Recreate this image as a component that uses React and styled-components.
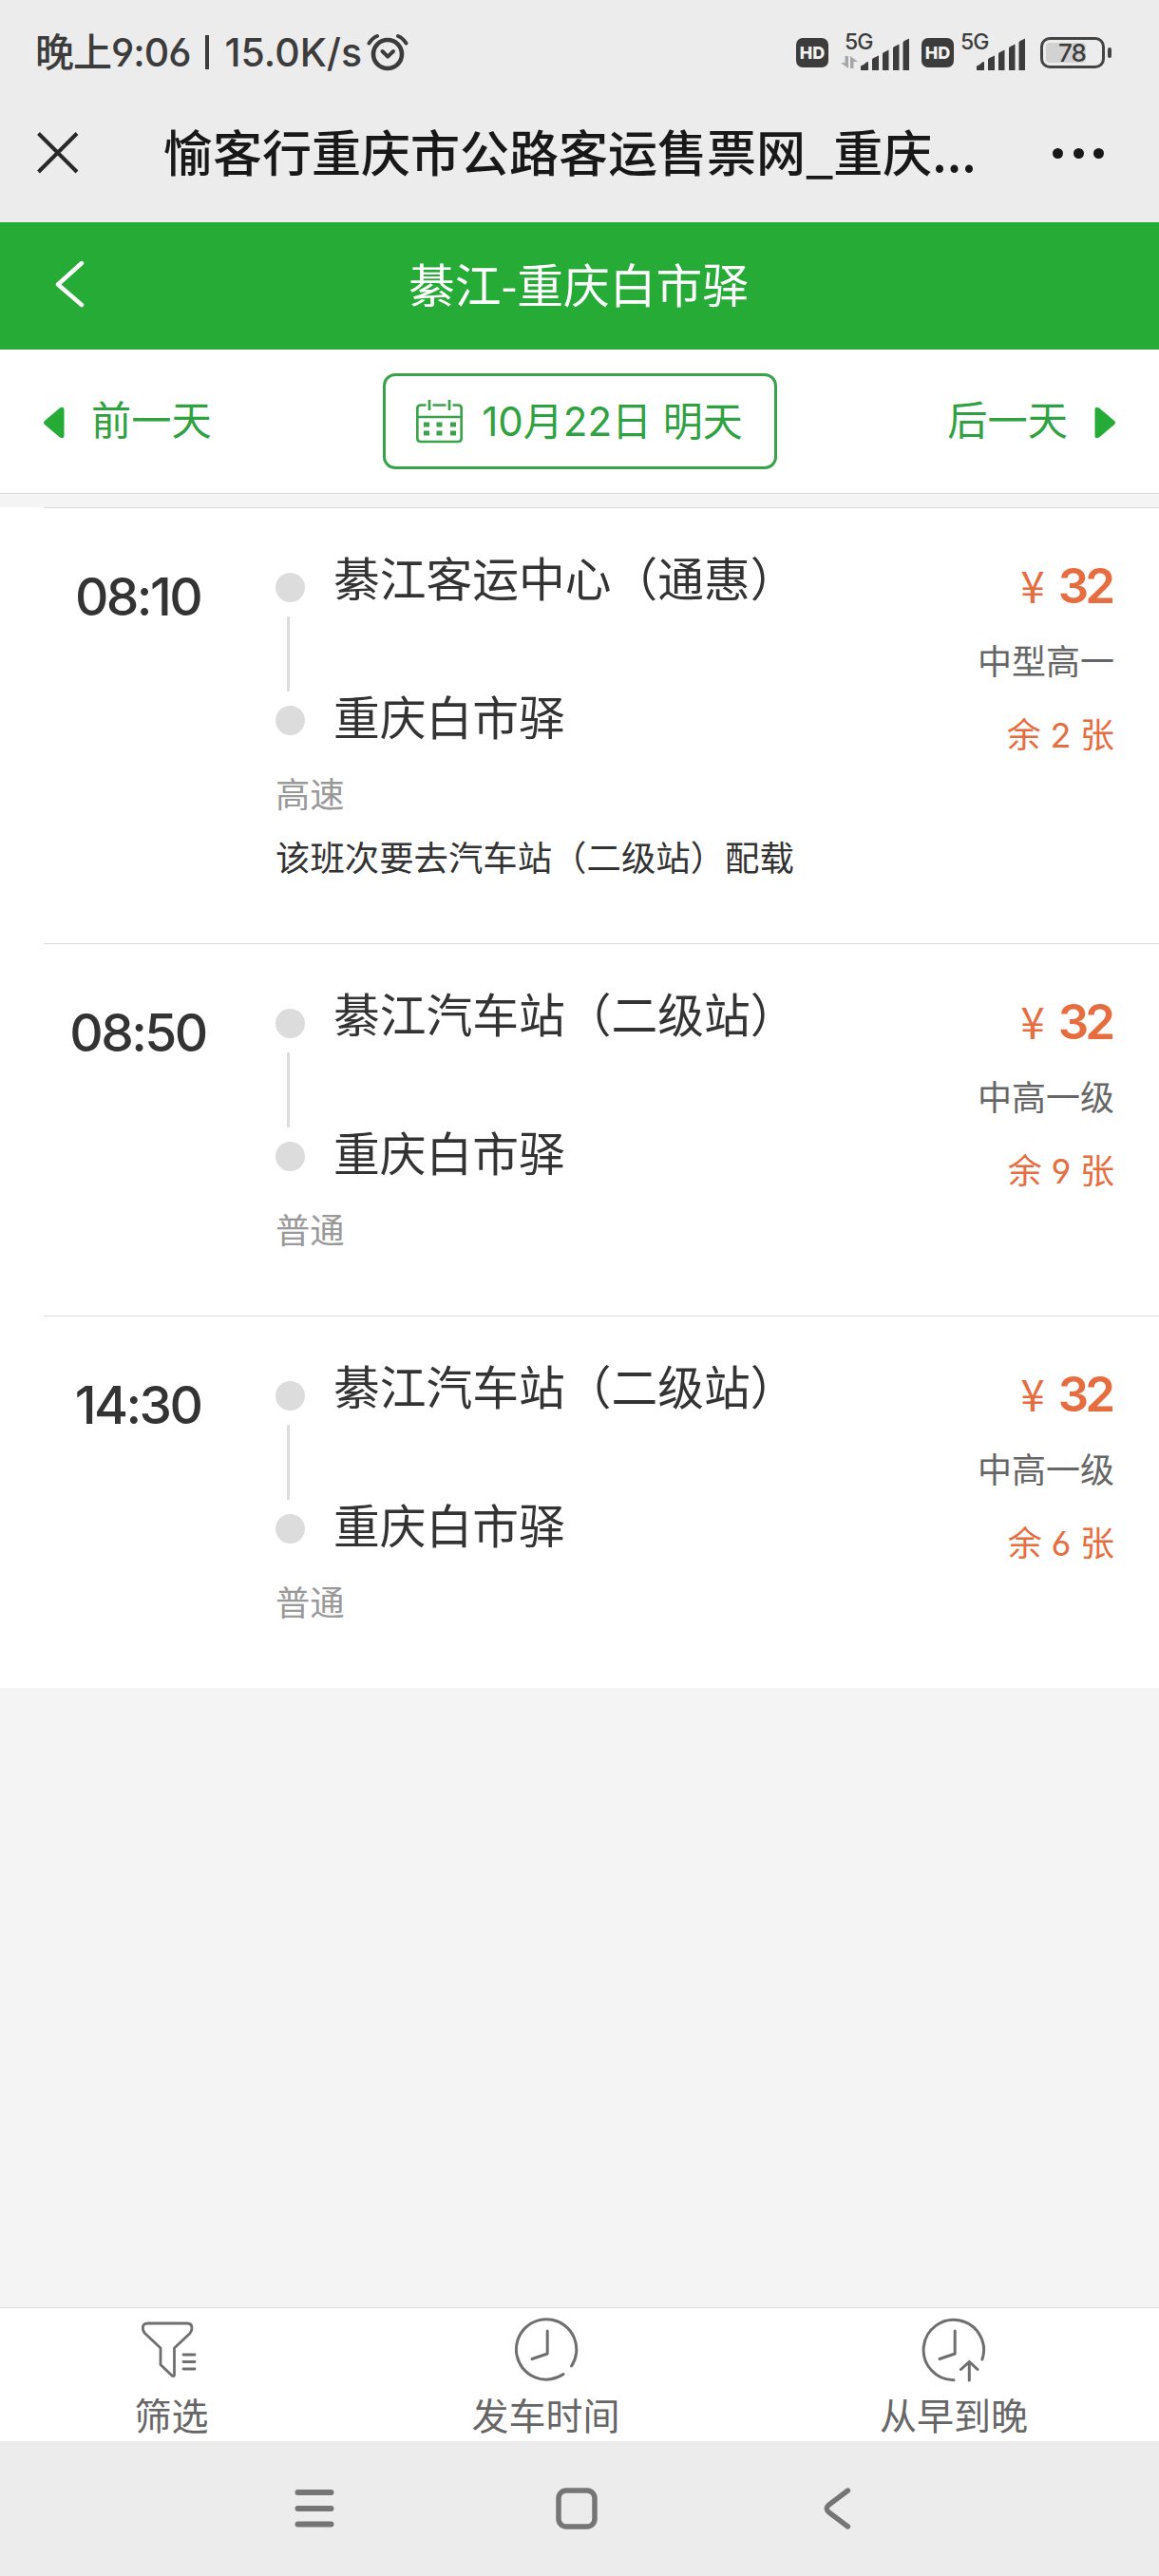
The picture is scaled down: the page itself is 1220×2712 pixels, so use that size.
import React from "react";
import styled, { createGlobalStyle } from "styled-components";

const GlobalStyle = createGlobalStyle`
  * {
    box-sizing: border-box;
  }
  body {
    margin: 0;
    font-family: "Inter", "Noto Sans CJK SC", sans-serif;
    font-feature-settings: "cv03", "cv04";
    background-color: #f4f4f4;
  }
  svg {
    display: block;
    flex-shrink: 0;
  }
`;

const Wrapper = styled.div`
  display: flex;
  flex-direction: column;
  width: 1220px;
  height: 2712px;
  overflow: hidden;
  background-color: #f4f4f4;
  white-space: nowrap;
`;

const StatusBar = styled.div`
  display: flex;
  align-items: center;
  justify-content: space-between;
  height: 108px;
  padding: 2px 50px 0 37px;
  background-color: #ececec;
  color: #3c3c3c;
`;

const StatusLeft = styled.div`
  display: flex;
  align-items: center;
  font-size: 41px;
  font-weight: 500;
  line-height: 50px;
`;

const StatusClock = styled.span`
  letter-spacing: -1px;
`;

const StatusDivider = styled.div`
  width: 4px;
  height: 36px;
  margin: 0 17px 0 15px;
  background-color: #3c3c3c;
`;

const StatusSpeed = styled.span`
  margin-right: 5px;
`;

const StatusRight = styled.div`
  display: flex;
  align-items: center;
`;

const HdBadge = styled.div`
  width: 34px;
  height: 31px;
  margin-right: ${(props) => props.$gap}px;
  border-radius: 7px;
  background-color: #3c3c3c;
  color: #f2f2f2;
  font-size: 18px;
  font-weight: 800;
  line-height: 31px;
  text-align: center;
`;

const Signal = styled.div`
  display: flex;
  align-items: flex-end;
  height: 38px;
  margin-right: ${(props) => props.$gap}px;
`;

const SignalType = styled.div`
  display: flex;
  flex-direction: column;
  align-items: flex-start;
  justify-content: space-between;
  width: ${(props) => props.$width}px;
  height: 38px;
  padding-bottom: 2px;
  margin-right: -12px;
  font-size: 23px;
  font-weight: 500;
  line-height: 17px;
  letter-spacing: -1px;
  span {
    margin-left: ${(props) => props.$indent}px;
  }
`;

const Battery = styled.div`
  display: flex;
  align-items: center;
  gap: 3px;
`;

const BatteryCase = styled.div`
  width: 68px;
  height: 33px;
  padding: 3px;
  border: 3px solid #444;
  border-radius: 10px;
`;

const BatteryLevel = styled.div`
  width: 42px;
  height: 21px;
  border-radius: 4px;
  background-color: #d2d2d2;
  color: #3c3c3c;
  font-size: 26px;
  font-weight: 500;
  line-height: 21px;
  text-indent: 13px;
  letter-spacing: -1px;
`;

const BatteryTip = styled.div`
  width: 4px;
  height: 11px;
  border-radius: 2px;
  background-color: #444;
`;

const TitleBar = styled.div`
  display: flex;
  align-items: center;
  height: 126px;
  padding: 0 58px 20px 39px;
  background-color: #ececec;
  color: #181818;
`;

const PageTitle = styled.div`
  flex: 1;
  margin: -5px 0 0 89px;
  font-family: "Noto Sans CJK SC", sans-serif;
  font-size: 52px;
  font-weight: 500;
  line-height: 70px;
`;

const MoreDots = styled.div`
  display: flex;
  gap: 10.5px;
  i {
    width: 11px;
    height: 11px;
    border-radius: 50%;
    background-color: #181818;
  }
`;

const RouteHeader = styled.div`
  display: grid;
  grid-template-columns: 100px 1fr 100px;
  align-items: center;
  height: 134px;
  padding: 0 0 4px;
  background-color: #26ab37;
  color: #fff;
  svg {
    margin-left: 58px;
  }
`;

const RouteTitle = styled.div`
  margin: -3px 2px 0 0;
  font-family: "Noto Sans CJK SC", sans-serif;
  font-size: 48.75px;
  line-height: 66px;
  text-align: center;
`;

const DateBar = styled.div`
  display: flex;
  align-items: center;
  justify-content: space-between;
  height: 152px;
  padding: 0 46px;
  background-color: #fff;
  border-bottom: 1px solid #dadada;
  color: #2fa141;
`;

const DayButton = styled.div`
  display: flex;
  align-items: center;
  gap: 28px;
  margin-top: -2px;
  font-size: 42.25px;
  line-height: 60px;
  svg {
    margin-top: 5px;
  }
`;

const DateBox = styled.div`
  display: flex;
  align-items: center;
  justify-content: center;
  gap: 20px;
  width: 415px;
  height: 101px;
  border: 3px solid #3ba14b;
  border-radius: 13px;
  font-size: 42px;
  line-height: 60px;
`;

const List = styled.div`
  margin-top: 14px;
  background-color: #fff;
`;

const Row = styled.div`
  display: flex;
  margin-left: 46px;
  padding: 45px 47px 64px 0;
  border-top: 1px solid #dadada;
`;

const Time = styled.div`
  width: 198px;
  padding-top: 18px;
  color: #333;
  font-size: 55px;
  font-weight: 500;
  line-height: 60px;
  letter-spacing: -2.6px;
  text-align: center;
`;

const Detail = styled.div`
  flex: 1;
  margin-left: 46px;
`;

const Route = styled.div`
  display: flex;
`;

const Track = styled.div`
  display: flex;
  flex-direction: column;
  gap: 15px;
  width: 61px;
  padding-top: 23px;
`;

const Dot = styled.div`
  width: 31px;
  height: 31px;
  border-radius: 50%;
  background-color: #dcdcdc;
`;

const Line = styled.div`
  width: 3px;
  height: 79px;
  margin-left: 12px;
  background-color: #dcdcdc;
`;

const Stations = styled.div`
  display: flex;
  flex-direction: column;
  gap: 86px;
  padding-top: 1px;
  color: #333;
  font-size: 48.75px;
  line-height: 60px;
`;

const Tag = styled.div`
  margin-top: 25px;
  color: #999;
  font-size: 36.3px;
  line-height: 50px;
`;

const Note = styled.div`
  margin-top: 17px;
  color: #333;
  font-size: 36.4px;
  line-height: 50px;
`;

const Side = styled.div`
  display: flex;
  flex-direction: column;
  align-items: flex-end;
  color: #e56d40;
`;

const Price = styled.div`
  margin: 7px 3px 0 0;
  font-size: 51px;
  font-weight: 600;
  line-height: 60px;
  letter-spacing: -4px;
  span {
    margin-right: 18px;
    font-family: "Noto Sans CJK SC", sans-serif;
    font-size: 46px;
    font-weight: 400;
    line-height: 1;
  }
`;

const BusType = styled.div`
  margin-top: 25px;
  color: #666;
  font-size: 36px;
  line-height: 50px;
`;

const Remain = styled.div`
  margin-top: 27px;
  font-size: 36px;
  line-height: 50px;
  word-spacing: -0.5px;
`;

const TabBar = styled.div`
  display: grid;
  grid-template-columns: 361px 427px 432px;
  height: 141px;
  margin-top: auto;
  background-color: #fff;
  border-top: 1px solid #dadada;
`;

const Tab = styled.div`
  display: flex;
  flex-direction: column;
  align-items: center;
  color: #666;
  font-size: 39px;
  line-height: 50px;
`;

const TabIcon = styled.div`
  display: flex;
  align-items: center;
  height: 68px;
  margin: 10px 0 11px;
  padding-right: ${(props) => props.$shift || 0}px;
`;

const NavBar = styled.div`
  display: flex;
  align-items: center;
  justify-content: center;
  gap: 233px;
  height: 142px;
  padding-right: 4px;
  background-color: #ececec;
`;

const buses = [
  {
    time: "08:10",
    from: "綦江客运中心（通惠）",
    to: "重庆白市驿",
    tag: "高速",
    note: "该班次要去汽车站（二级站）配载",
    price: 32,
    type: "中型高一",
    remain: 2,
  },
  {
    time: "08:50",
    from: "綦江汽车站（二级站）",
    to: "重庆白市驿",
    tag: "普通",
    price: 32,
    type: "中高一级",
    remain: 9,
  },
  {
    time: "14:30",
    from: "綦江汽车站（二级站）",
    to: "重庆白市驿",
    tag: "普通",
    price: 32,
    type: "中高一级",
    remain: 6,
  },
];

const AlarmIcon = () => (
  <svg width="44" height="40" viewBox="0 0 44 40" fill="none" stroke="#3c3c3c">
    <circle cx="22" cy="22" r="15" strokeWidth="4.6" />
    <path
      d="M2.5 10.5Q6 5 11 3M41.5 10.5Q38 5 33 3"
      strokeWidth="4"
      strokeLinecap="round"
    />
    <path
      d="M16.5 19l5.7 5.6 5.8-5.6"
      strokeWidth="4"
      strokeLinecap="round"
      strokeLinejoin="round"
    />
  </svg>
);

const SignalBars = () => (
  <svg width="51" height="34" viewBox="0 0 51 34" fill="#3c3c3c">
    <path d="M0 34V29.5Q4 28 6 25.5Q8 24.5 8 26V34Z" />
    <path d="M12 34V23Q12 21.5 13.5 21L19 18.5V34Z" />
    <path d="M23 34V17Q23 15.5 24.5 15L29.5 12.5V34Z" />
    <path d="M34 34V11Q34 9.5 35.5 9L40.5 6.5V34Z" />
    <path d="M44.5 34V5Q44.5 3.5 46 3L51 .5V34Z" />
  </svg>
);

const DataArrows = () => (
  <svg width="18" height="13" viewBox="0 0 18 13" fill="#a6a6a6">
    <path d="M4.500 0h3.500v13L0 7h4.500zM10 13h3.500V6h4.500L10 0z" />
  </svg>
);

const CloseIcon = () => (
  <svg width="44" height="44" viewBox="0 0 44 44">
    <path d="M1.5 1.5L42 42M42 1.5L1.5 42" stroke="#282828" strokeWidth="4" />
  </svg>
);

const BackIcon = () => (
  <svg width="32" height="50" viewBox="0 0 32 50" fill="none">
    <path
      d="M28 3L3 25.5L28 47"
      stroke="#fff"
      strokeWidth="4.4"
      strokeLinecap="round"
      strokeLinejoin="round"
    />
  </svg>
);

const ArrowLeft = () => (
  <svg width="22" height="34" viewBox="0 0 22 34" fill="#26ab37">
    <path d="M1 15L17 1.5Q21.5-1 21.5 4V30Q21.5 35 17 32.5L1 19Q-1 17 1 15Z" />
  </svg>
);

const ArrowRight = () => (
  <svg width="22" height="34" viewBox="0 0 22 34" fill="#26ab37">
    <path d="M21 15L5 1.5Q.5-1 .5 4V30Q.5 35 5 32.5L21 19Q23 17 21 15Z" />
  </svg>
);

const CalendarIcon = () => (
  <svg width="49" height="46" viewBox="0 0 49 46" fill="none" stroke="#3ba14b">
    <path
      d="M10.5 5.5H5Q1.3 5.5 1.3 9V40Q1.3 44 5 44H44Q47.7 44 47.7 40V9Q47.7 5.5 44 5.5H38.5M17.5 5.5H31.5M1.3 18H47.7M14 0V11M35 0V11"
      strokeWidth="2.7"
    />
    <path
      d="M8 26H14M21.5 26H27.5M36 26H42M8 35H14M21.5 35H27.5M36 35H42"
      strokeWidth="5"
    />
  </svg>
);

const FilterIcon = () => (
  <svg
    width="58"
    height="60"
    viewBox="0 0 58 60"
    fill="none"
    stroke="#6e6e6e"
    strokeWidth="2.8"
    strokeLinecap="round"
    strokeLinejoin="round"
  >
    <path d="M6.5 2H48Q53 2 53 7Q53 10 51 12.5L34.5 28V56.5Q33.5 58.5 32 57L20 45.5V28L3.5 12.5Q1.3 10 1.3 7Q1.3 2 6.5 2Z" />
    <path d="M44 35H56M44 42.5H56M44 50H56" />
  </svg>
);

const ClockIcon = () => (
  <svg
    width="68"
    height="68"
    viewBox="0 0 68 68"
    fill="none"
    stroke="#6e6e6e"
    strokeWidth="3"
    strokeLinecap="round"
  >
    <path d="M60.5 51A31.7 31.7 0 1 0 52 59.6" />
    <path d="M35.2 14V38L19 43.5" strokeLinejoin="round" />
  </svg>
);

const ClockUpIcon = () => (
  <svg
    width="68"
    height="68"
    viewBox="0 0 68 68"
    fill="none"
    stroke="#6e6e6e"
    strokeWidth="3"
    strokeLinecap="round"
  >
    <path d="M63.9 44A31.7 31.7 0 1 0 34 65.7" />
    <path d="M35.2 14V38L19 43.5" strokeLinejoin="round" />
    <path d="M50.3 66V47M41.5 54.5L50.3 46.5L59 54.5" />
  </svg>
);

const MenuKey = () => (
  <svg width="42" height="44" viewBox="0 0 42 44" stroke="#757575">
    <path
      d="M3.5 5H38.5M3.5 22H38.5M3.5 38.5H38.5"
      strokeWidth="6"
      strokeLinecap="round"
    />
  </svg>
);

const HomeKey = () => (
  <svg width="44" height="44" viewBox="0 0 44 44" fill="none">
    <rect x="3" y="3" width="38" height="38" rx="8" stroke="#757575" strokeWidth="5.5" />
  </svg>
);

const BackKey = () => (
  <svg width="44" height="44" viewBox="0 0 44 44" fill="none">
    <path
      d="M30.5 3L10.5 18Q6 22 10.5 26L30.5 41"
      stroke="#757575"
      strokeWidth="5.4"
      strokeLinecap="round"
    />
  </svg>
);

const BusRow = ({ bus }) => {
  return (
    <Row>
      <Time>{bus.time}</Time>
      <Detail>
        <Route>
          <Track>
            <Dot />
            <Line />
            <Dot />
          </Track>
          <Stations>
            <div>{bus.from}</div>
            <div>{bus.to}</div>
          </Stations>
        </Route>
        <Tag>{bus.tag}</Tag>
        {bus.note && <Note>{bus.note}</Note>}
      </Detail>
      <Side>
        <Price>
          <span>¥</span>
          {bus.price}
        </Price>
        <BusType>{bus.type}</BusType>
        <Remain>余 {bus.remain} 张</Remain>
      </Side>
    </Row>
  );
};

const App = () => {
  return (
    <Wrapper>
      <GlobalStyle />
      <StatusBar>
        <StatusLeft>
          <StatusClock>晚上9:06</StatusClock>
          <StatusDivider />
          <StatusSpeed>15.0K/s</StatusSpeed>
          <AlarmIcon />
        </StatusLeft>
        <StatusRight>
          <HdBadge $gap={13}>HD</HdBadge>
          <Signal $gap={13}>
            <SignalType $width={33} $indent={4}>
              <span>5G</span>
              <DataArrows />
            </SignalType>
            <SignalBars />
          </Signal>
          <HdBadge $gap={7}>HD</HdBadge>
          <Signal $gap={16}>
            <SignalType $width={29} $indent={0}>
              <span>5G</span>
            </SignalType>
            <SignalBars />
          </Signal>
          <Battery>
            <BatteryCase>
              <BatteryLevel>78</BatteryLevel>
            </BatteryCase>
            <BatteryTip />
          </Battery>
        </StatusRight>
      </StatusBar>
      <TitleBar>
        <CloseIcon />
        <PageTitle>愉客行重庆市公路客运售票网_重庆...</PageTitle>
        <MoreDots>
          <i />
          <i />
          <i />
        </MoreDots>
      </TitleBar>
      <RouteHeader>
        <BackIcon />
        <RouteTitle>綦江-重庆白市驿</RouteTitle>
      </RouteHeader>
      <DateBar>
        <DayButton>
          <ArrowLeft />
          前一天
        </DayButton>
        <DateBox>
          <CalendarIcon />
          <span>10月22日 明天</span>
        </DateBox>
        <DayButton>
          后一天
          <ArrowRight />
        </DayButton>
      </DateBar>
      <List>
        {buses.map((bus) => (
          <BusRow key={bus.time} bus={bus} />
        ))}
      </List>
      <TabBar>
        <Tab>
          <TabIcon $shift={6}>
            <FilterIcon />
          </TabIcon>
          筛选
        </Tab>
        <Tab>
          <TabIcon>
            <ClockIcon />
          </TabIcon>
          发车时间
        </Tab>
        <Tab>
          <TabIcon>
            <ClockUpIcon />
          </TabIcon>
          从早到晚
        </Tab>
      </TabBar>
      <NavBar>
        <MenuKey />
        <HomeKey />
        <BackKey />
      </NavBar>
    </Wrapper>
  );
};

export default App;
